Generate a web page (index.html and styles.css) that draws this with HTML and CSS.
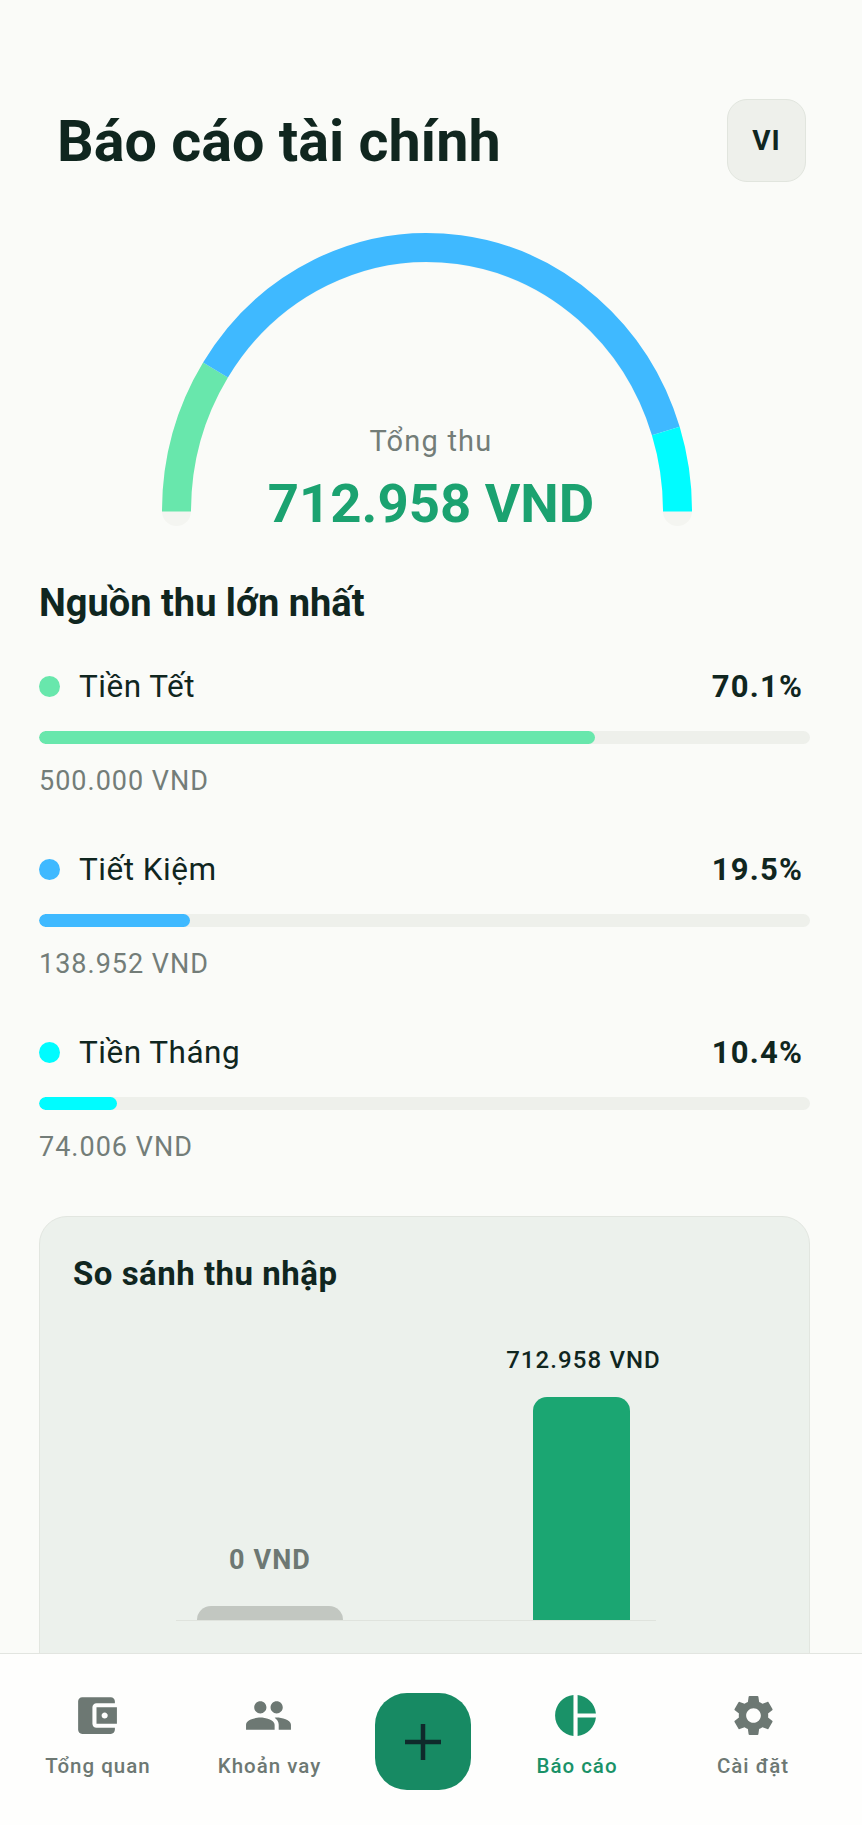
FILE: index.html
```html
<!DOCTYPE html>
<html lang="vi">
<head>
    <meta charset="UTF-8">
    <title>Báo cáo tài chính</title>
    <link rel="stylesheet" href="styles.css">
</head>
<body>
    <div class="content">
        <div class="header">
            <h1>Báo cáo tài chính</h1>
            <button class="lang-button">VI</button>
        </div>

        <div class="gauge">
            <svg class="gauge-arc" viewBox="39 230 771 300" width="771" height="300" fill="none" stroke-width="29">
                <path d="M176.5 511.5A250.5 263.5 0 0 1 677.5 511.5" stroke="#f4f5f1" stroke-linecap="round"/>
                <path d="M176.5 511.5A250.5 263.5 0 0 1 215.5 370" stroke="#68e7ac"/>
                <path d="M215.5 370A250.5 263.5 0 0 1 665.8 431" stroke="#3fb9ff"/>
                <path d="M665.8 431A250.5 263.5 0 0 1 677.5 511.5" stroke="#00fcff"/>
            </svg>
            <div class="gauge-text">
                <div class="gauge-label">Tổng thu</div>
                <div class="gauge-value">712.958 VND</div>
            </div>
        </div>

        <h2 class="section-title">Nguồn thu lớn nhất</h2>

        <div class="source-list">
            <div class="source">
                <div class="source-head">
                    <span class="dot dot-green"></span>
                    <span class="source-name">Tiền Tết</span>
                    <span class="source-percent">70.1%</span>
                </div>
                <div class="progress-bar"><div class="progress-fill dot-green" style="width: 556px"></div></div>
                <div class="source-amount">500.000 VND</div>
            </div>
            <div class="source">
                <div class="source-head">
                    <span class="dot dot-blue"></span>
                    <span class="source-name">Tiết Kiệm</span>
                    <span class="source-percent">19.5%</span>
                </div>
                <div class="progress-bar"><div class="progress-fill dot-blue" style="width: 151px"></div></div>
                <div class="source-amount">138.952 VND</div>
            </div>
            <div class="source">
                <div class="source-head">
                    <span class="dot dot-cyan"></span>
                    <span class="source-name">Tiền Tháng</span>
                    <span class="source-percent">10.4%</span>
                </div>
                <div class="progress-bar"><div class="progress-fill dot-cyan" style="width: 78px"></div></div>
                <div class="source-amount">74.006 VND</div>
            </div>
        </div>

        <div class="compare-card">
            <h3 class="compare-title">So sánh thu nhập</h3>
            <div class="chart">
                <div class="chart-col chart-col-old">
                    <div class="chart-label">0 VND</div>
                    <div class="chart-bar" style="height: 14px"></div>
                </div>
                <div class="chart-col chart-col-new">
                    <div class="chart-label">712.958 VND</div>
                    <div class="chart-bar" style="height: 223px"></div>
                </div>
            </div>
        </div>
    </div>

    <div class="nav">
        <div class="nav-item">
            <svg class="nav-icon" viewBox="0 0 24 24"><path d="M21 18v1c0 1.1-.9 2-2 2H5c-1.11 0-2-.9-2-2V5c0-1.1.89-2 2-2h14c1.1 0 2 .9 2 2v1h-9c-1.11 0-2 .9-2 2v8c0 1.1.89 2 2 2h9zm-9-2h10V8H12v8zm4-2.5c-.83 0-1.5-.67-1.5-1.5s.67-1.5 1.5-1.5 1.5.67 1.5 1.5-.67 1.5-1.5 1.5z"/></svg>
            <span class="nav-label">Tổng quan</span>
        </div>
        <div class="nav-item">
            <svg class="nav-icon" viewBox="0 0 24 24"><path d="M16 11c1.66 0 2.99-1.34 2.99-3S17.66 5 16 5c-1.66 0-3 1.34-3 3s1.34 3 3 3zm-8 0c1.66 0 2.99-1.34 2.99-3S9.66 5 8 5C6.34 5 5 6.34 5 8s1.34 3 3 3zm0 2c-2.33 0-7 1.17-7 3.5V19h14v-2.5c0-2.33-4.67-3.5-7-3.5zm8 0c-.29 0-.62.02-.97.05 1.16.84 1.97 1.97 1.97 3.45V19h6v-2.5c0-2.33-4.67-3.5-7-3.5z"/></svg>
            <span class="nav-label">Khoản vay</span>
        </div>
        <div class="nav-item">
            <button class="add-button">
                <svg viewBox="0 0 36 36" width="36" height="36"><path d="M0 18H36M18 0V36" stroke="#0f2a2b" stroke-width="4.5"/></svg>
            </button>
        </div>
        <div class="nav-item active">
            <svg class="nav-icon" viewBox="0 0 24 24"><path d="M11 2v20c-5.07-.5-9-4.79-9-10s3.93-9.5 9-10zm2.03 0v8.99H22c-.47-4.74-4.24-8.52-8.97-8.99zm0 11.01V22c4.74-.47 8.5-4.25 8.97-8.99h-8.97z"/></svg>
            <span class="nav-label">Báo cáo</span>
        </div>
        <div class="nav-item">
            <svg class="nav-icon nav-icon-gear" viewBox="0 0 24 24"><path d="M19.14 12.94c.04-.3.06-.61.06-.94 0-.32-.02-.64-.07-.94l2.03-1.58c.18-.14.23-.41.12-.61l-1.92-3.32c-.12-.22-.37-.29-.59-.22l-2.39.96c-.5-.38-1.03-.7-1.62-.94l-.36-2.54c-.04-.24-.24-.41-.48-.41h-3.84c-.24 0-.43.17-.47.41l-.36 2.54c-.59.24-1.13.57-1.62.94l-2.39-.96c-.22-.08-.47 0-.59.22L2.74 8.87c-.12.21-.08.47.12.61l2.03 1.58c-.05.3-.09.63-.09.94s.02.64.07.94l-2.03 1.58c-.18.14-.23.41-.12.61l1.92 3.32c.12.22.37.29.59.22l2.39-.96c.5.38 1.03.7 1.62.94l.36 2.54c.05.24.24.41.48.41h3.84c.24 0 .44-.17.47-.41l.36-2.54c.59-.24 1.13-.56 1.62-.94l2.39.96c.22.08.47 0 .59-.22l1.92-3.32c.12-.22.07-.47-.12-.61l-2.01-1.58zM12 15.6c-1.98 0-3.6-1.62-3.6-3.6s1.62-3.6 3.6-3.6 3.6 1.62 3.6 3.6-1.62 3.6-3.6 3.6z"/></svg>
            <span class="nav-label">Cài đặt</span>
        </div>
    </div>
</body>
</html>
```

FILE: styles.css
```css
* {
    box-sizing: border-box;
}

html, body {
    margin: 0;
    height: 1825px;
    overflow: hidden;
}

body {
    display: flex;
    flex-direction: column;
    font-family: Roboto, "Noto Sans", sans-serif;
    color: #10261f;
    background: #fafbf8;
}

.content {
    flex: 1;
    min-height: 0;
    overflow: hidden;
    padding: 99px 52px 0 39px;
}

.header {
    display: flex;
    align-items: center;
    justify-content: space-between;
    height: 83px;
    padding: 2px 4px 0 18px;
}

.header h1 {
    margin: 0;
    font-size: 57.5px;
    font-weight: 700;
    line-height: 66px;
}

.lang-button {
    width: 79px;
    height: 83px;
    margin-top: -2px;
    border: 1px solid #e1e5de;
    border-radius: 20px;
    background: #eef0eb;
    color: #10261f;
    font-family: inherit;
    font-size: 28px;
    font-weight: 700;
    letter-spacing: 1px;
}

.gauge {
    position: relative;
    margin-top: 48px;
    height: 300px;
}

.gauge-arc {
    display: block;
}

.gauge-text {
    position: absolute;
    left: 0;
    right: -13px;
    top: 192px;
    text-align: center;
}

.gauge-label {
    font-size: 29px;
    line-height: 38px;
    letter-spacing: 1.2px;
    color: #737d78;
}

.gauge-value {
    margin-top: 12px;
    font-size: 54.5px;
    font-weight: 700;
    line-height: 62px;
    color: #1ba270;
}

.section-title {
    margin: 51px 0 0;
    font-size: 38px;
    font-weight: 700;
    line-height: 44px;
}

.source-list {
    display: flex;
    flex-direction: column;
    gap: 51px;
    margin-top: 41px;
}

.source-head {
    display: flex;
    align-items: center;
    height: 40px;
    padding-right: 7px;
}

.dot {
    width: 21px;
    height: 21px;
    border-radius: 50%;
    margin-right: 19px;
}

.dot-green {
    background: #68e7ac;
}

.dot-blue {
    background: #3fb9ff;
}

.dot-cyan {
    background: #00fcff;
}

.source-name {
    flex: 1;
    font-size: 31.5px;
    letter-spacing: 0.5px;
}

.source-percent {
    font-size: 31px;
    font-weight: 700;
    letter-spacing: 1.2px;
}

.progress-bar {
    height: 13px;
    margin-top: 25px;
    border-radius: 7px;
    background: #eef0eb;
    overflow: hidden;
}

.progress-fill {
    height: 100%;
    border-radius: 7px;
}

.source-amount {
    margin-top: 20px;
    font-size: 27px;
    line-height: 34px;
    letter-spacing: 1px;
    color: #737d78;
}

.compare-card {
    margin-top: 52px;
    padding: 36px 33px 60px;
    border: 1px solid #e2e6e0;
    border-radius: 28px;
    background: #ecf1ec;
}

.compare-title {
    margin: 0;
    font-size: 33px;
    font-weight: 700;
    line-height: 42px;
    letter-spacing: 0.5px;
}

.chart {
    display: flex;
    align-items: flex-end;
    justify-content: space-between;
    width: 480px;
    height: 326px;
    margin-left: 103px;
    padding: 0 26px 0 21px;
    border-bottom: 1px solid #dfe3dd;
}

.chart-col {
    display: flex;
    flex-direction: column;
    align-items: center;
}

.chart-col-old {
    width: 146px;
    color: #6d7873;
}

.chart-col-new {
    width: 97px;
}

.chart-label {
    font-size: 24px;
    font-weight: 500;
    line-height: 34px;
    letter-spacing: 1.1px;
    white-space: nowrap;
}

.chart-col-old .chart-label {
    margin-bottom: 29px;
    font-size: 27px;
    font-weight: 700;
}

.chart-col-new .chart-label {
    margin-bottom: 20px;
    margin-left: 4px;
}

.chart-bar {
    width: 100%;
    border-radius: 14px 14px 0 0;
    background: #1ba672;
}

.chart-col-old .chart-bar {
    background: #c2c7c1;
}

.nav {
    flex: none;
    display: grid;
    grid-template-columns: 196px 147px 160px 148px 204px;
    height: 172px;
    padding-top: 37px;
    border-top: 1px solid #e2e5e0;
    background: #fefefd;
}

.nav-item {
    display: flex;
    flex-direction: column;
    align-items: center;
    color: #6d7873;
}

.nav-item.active {
    color: #1a9268;
}

.nav-icon {
    width: 49px;
    height: 49px;
    margin-right: 3px;
    fill: currentColor;
}

.nav-icon-gear {
    margin-right: 0;
}

.nav-label {
    margin-top: 11px;
    font-size: 20.5px;
    font-weight: 500;
    line-height: 30px;
    letter-spacing: 1px;
}

.add-button {
    display: flex;
    align-items: center;
    justify-content: center;
    width: 96px;
    height: 97px;
    margin-top: 2px;
    padding: 0;
    border: none;
    border-radius: 32px;
    background: #178a63;
}
```
